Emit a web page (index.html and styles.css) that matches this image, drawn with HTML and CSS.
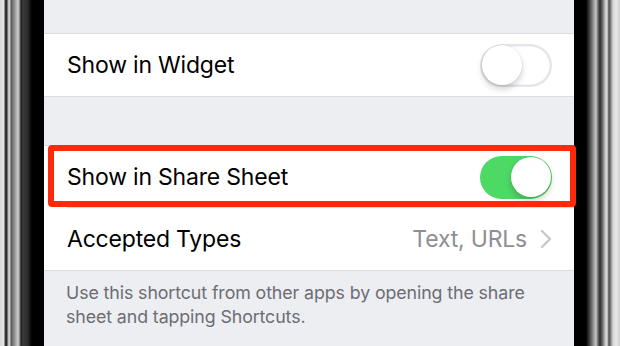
FILE: index.html
```html
<!DOCTYPE html>
<html>
<head>
<meta charset="utf-8">
<link rel="stylesheet" href="styles.css">
</head>
<body>
<div class="device">
  <div class="bezel bezel-left"></div>
  <div class="screen">
    <div class="gap-top"></div>
    <div class="group">
      <div class="row">
        <span class="label">Show in Widget</span>
        <span class="switch"><span class="knob"></span></span>
      </div>
    </div>
    <div class="gap-mid"></div>
    <div class="group">
      <div class="row row-first">
        <span class="label">Show in Share Sheet</span>
        <span class="switch on"><span class="knob"></span></span>
      </div>
      <div class="row">
        <span class="label">Accepted Types</span>
        <span class="detail">Text, URLs
          <svg class="chev" width="12" height="20" viewBox="0 0 12 20"><path d="M2 2 L10 10 L2 18" fill="none" stroke="#c7c7cc" stroke-width="2.4" stroke-linecap="round" stroke-linejoin="round"/></svg>
        </span>
      </div>
    </div>
    <p class="footer">Use this shortcut from other apps by opening the share sheet and tapping Shortcuts.</p>
    <div class="highlight"></div>
  </div>
  <div class="bezel bezel-right"></div>
</div>
</body>
</html>
```

FILE: styles.css
```css
* { box-sizing: border-box; }
html, body { margin: 0; padding: 0; }
body {
  width: 620px;
  height: 346px;
  overflow: hidden;
  font-family: Inter, "Noto Sans", sans-serif;
  background: #000;
}
.device {
  display: flex;
  width: 620px;
  height: 346px;
}
.bezel-left {
  width: 44px;
  flex: none;
  background: linear-gradient(to right,
    #d8d8d8 0px, #e6e6e6 4px, #3a3a3a 5px, #2a2a2a 7px, #b8b8b8 8px, #cfcfcf 10px,
    #505050 11px, #6a6a6a 12px, #9a9a9a 15px, #d0d0d0 18px, #777 20px, #1c1c1c 21px,
    #3b3b3b 23px, #2a2a2a 28px, #080808 31px, #000 32px, #000 44px);
}
.bezel-right {
  width: 46px;
  flex: none;
  background: linear-gradient(to right,
    #000 0px, #000 12px, #111 13px, #4a4a4a 16px, #8a8a8a 19px, #c8c8c8 22px,
    #6a6a6a 24px, #2c2c2c 26px, #5a5a5a 28px, #bdbdbd 31px, #dedede 33px,
    #4a4a4a 35px, #8e8e8e 37px, #d6d6d6 39px, #e8e8e8 42px, #cfcfcf 46px);
}
.screen {
  position: relative;
  flex: 1;
  background: #eceef2;
  display: flex;
  flex-direction: column;
}
.gap-top { height: 33px; flex: none; }
.gap-mid { height: 48px; flex: none; }
.group {
  background: #fff;
  border-top: 1px solid #dcdce0;
  border-bottom: 1px solid #dcdce0;
}
.row {
  height: 62px;
  display: flex;
  align-items: center;
  justify-content: space-between;
  padding: 0 22px 0 23px;
  position: relative;
}
.row-first::after {
  content: "";
  position: absolute;
  left: 23px;
  right: 0;
  bottom: 0;
  height: 1px;
  background: #dcdce0;
}
.label {
  font-size: 23px;
  color: #000;
  letter-spacing: -0.2px;
}
.detail {
  display: flex;
  align-items: center;
  gap: 13px;
  font-size: 23px;
  color: #8e8e93;
  letter-spacing: -0.2px;
}
.chev { display: block; }
.switch {
  width: 72px;
  height: 43px;
  border-radius: 22px;
  background: #fff;
  box-shadow: inset 0 0 0 2.5px #e6e6ea;
  position: relative;
  flex: none;
}
.switch .knob {
  position: absolute;
  top: 1.5px;
  left: 1.5px;
  width: 40px;
  height: 40px;
  border-radius: 50%;
  background: #fff;
  box-shadow: 0 4px 6px rgba(0,0,0,0.18), 0 0 0 0.6px rgba(0,0,0,0.08);
}
.switch.on {
  background: #4cd964;
  box-shadow: none;
}
.switch.on .knob {
  left: auto;
  right: 1.5px;
}
.footer {
  margin: 0;
  padding: 10px 23px 0 22px;
  font-size: 17.8px;
  line-height: 24px;
  color: #6d6d72;
  letter-spacing: -0.1px;
}
.highlight {
  position: absolute;
  left: 4px;
  top: 145px;
  width: 528px;
  height: 62px;
  border: 6.5px solid #ff2a0c;
  border-radius: 4px;
  pointer-events: none;
}
```
